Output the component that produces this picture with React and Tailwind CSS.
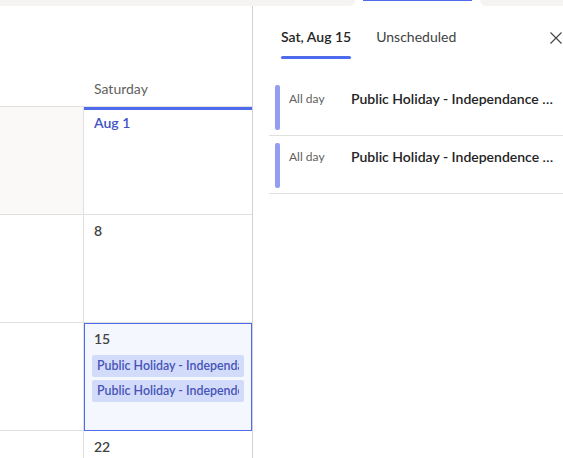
const font = { fontFamily: 'Lato, "Noto Sans", sans-serif' };

const events = [
  "Public Holiday - Independance Day",
  "Public Holiday - Independence Day",
];

function DayCell({ label, children, selected, today }) {
  return (
    <div
      className={`relative h-[108px] overflow-hidden border-b border-[#e0e0e0] ${
        selected ? "bg-[#f5f7fe] outline outline-1 -outline-offset-1 outline-[#4f6bed]" : "bg-white"
      }`}
    >
      {today && <div className="h-[3px] bg-[#4f6bed]" />}
      <div
        className={`px-[10px] text-[14px] font-semibold leading-5 ${
          today ? "pt-[3px] text-[#4052c4]" : "pt-[6px] text-[#424242]"
        }`}
      >
        {label}
      </div>
      {children}
    </div>
  );
}

function Chip({ title }) {
  return (
    <div className="mx-[8px] mb-[3px] h-[22px] rounded-[2px] bg-[#d3dbfb] px-[5px]">
      <div className="overflow-hidden whitespace-nowrap text-[12.4px] font-semibold leading-[22px] text-[#4653b8]">
        {title}
      </div>
    </div>
  );
}

function Calendar() {
  return (
    <div className="w-[253px] shrink-0 border-r border-[#d1d1d1]">
      <div className="grid h-[101px] grid-cols-[84px_minmax(0,1fr)] border-b border-[#e0e0e0]">
        <div />
        <div className="flex items-end px-[10px] pb-[7px] text-[14px] text-[#616161]">Saturday</div>
      </div>
      <div className="grid grid-cols-[84px_minmax(0,1fr)]">
        <div className="flex flex-col">
          <div className="h-[108px] border-b border-r border-[#e0e0e0] bg-[#faf9f8]" />
          <div className="h-[108px] border-b border-r border-[#e0e0e0]" />
          <div className="h-[108px] border-b border-r border-[#e0e0e0]" />
          <div className="h-[108px] border-r border-[#e0e0e0]" />
        </div>
        <div className="flex min-w-0 flex-col">
          <DayCell label="Aug 1" today />
          <DayCell label="8" />
          <DayCell label="15" selected>
            <div className="mt-[6px]">
              {events.map((e) => (
                <Chip key={e} title={e} />
              ))}
            </div>
          </DayCell>
          <DayCell label="22" />
        </div>
      </div>
    </div>
  );
}

function Panel() {
  return (
    <div className="min-w-0 flex-1">
      <div className="flex h-[72px] items-start pl-[28px] pr-[1px] pt-[21px]">
        <div className="relative text-[14px] font-semibold leading-5 text-[#242424]">
          Sat, Aug 15
          <div className="absolute -bottom-[12px] left-0 right-0 h-[3px] rounded-full bg-[#4f6bed]" />
        </div>
        <div className="ml-[25px] text-[14px] leading-5 text-[#424242]">Unscheduled</div>
        <div className="ml-auto mt-[5px]">
          <svg width="12" height="12" viewBox="0 0 12 12" fill="none" stroke="#424242" strokeWidth="1.1">
            <path d="M0.5 0.5l11 11M11.5 0.5l-11 11" />
          </svg>
        </div>
      </div>
      <div className="ml-[16px]">
        {events.map((e) => (
          <div key={e} className="flex h-[58px] items-start border-b border-[#e0e0e0] pl-[6px] pt-[7px]">
            <div className="h-[45px] w-[5px] shrink-0 rounded-[2px] bg-[#949ef0]" />
            <div className="ml-[9px] w-[62px] shrink-0 pt-[6px] text-[12px] leading-4 text-[#616161]">All day</div>
            <div className="min-w-0 flex-1 truncate pt-[4px] text-[14px] font-semibold leading-5 text-[#242424]">
              {e}
            </div>
          </div>
        ))}
      </div>
    </div>
  );
}

export default function App() {
  return (
    <div className="flex h-[458px] w-[563px] flex-col overflow-hidden bg-white" style={font}>
      <div className="flex h-[6px] shrink-0">
        <div className="w-[355px] rounded-br-[6px] bg-[#f5f4f3]" />
        <div className="w-[125px] px-[8px]">
          <div className="h-[1px] bg-[#4f6bed]" />
        </div>
        <div className="flex-1 rounded-bl-[6px] bg-[#f5f4f3]" />
      </div>
      <div className="flex min-h-0 flex-1">
        <Calendar />
        <Panel />
      </div>
    </div>
  );
}
